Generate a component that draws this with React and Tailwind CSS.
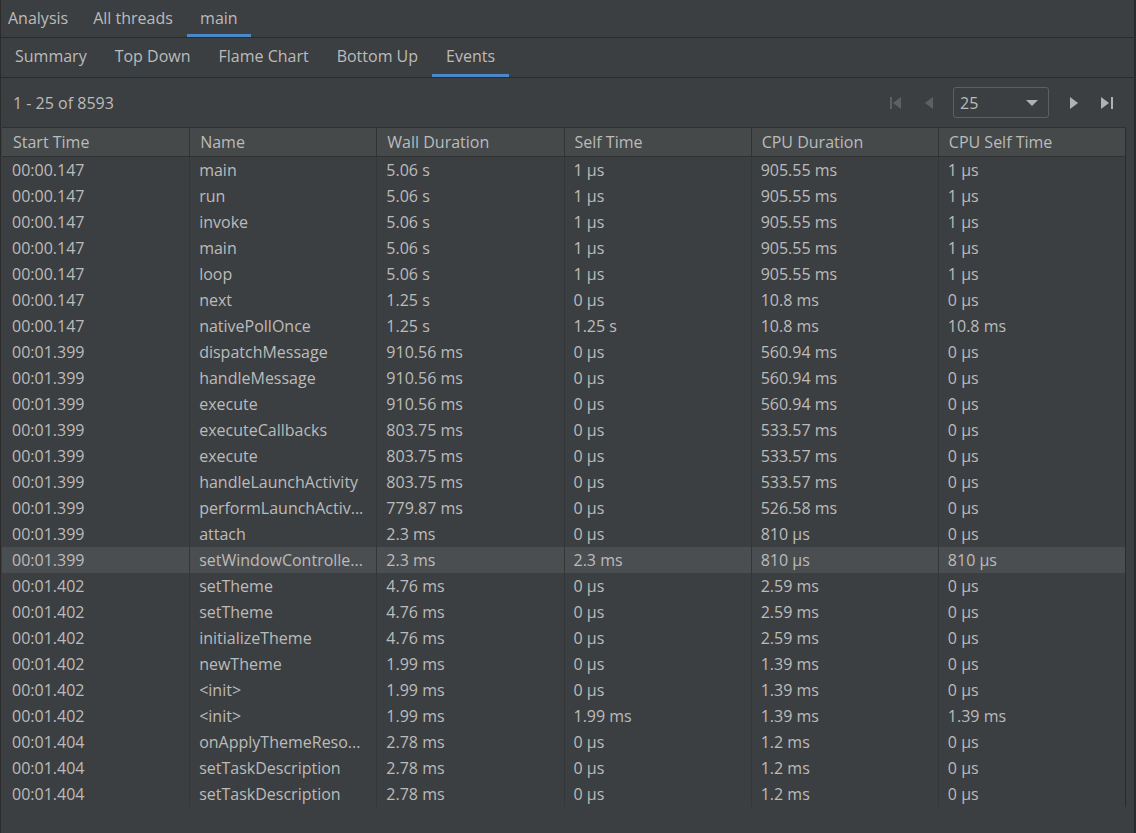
import React from "react";

const rows = [
  ["00:00.147", "main", "5.06 s", "1 μs", "905.55 ms", "1 μs"],
  ["00:00.147", "run", "5.06 s", "1 μs", "905.55 ms", "1 μs"],
  ["00:00.147", "invoke", "5.06 s", "1 μs", "905.55 ms", "1 μs"],
  ["00:00.147", "main", "5.06 s", "1 μs", "905.55 ms", "1 μs"],
  ["00:00.147", "loop", "5.06 s", "1 μs", "905.55 ms", "1 μs"],
  ["00:00.147", "next", "1.25 s", "0 μs", "10.8 ms", "0 μs"],
  ["00:00.147", "nativePollOnce", "1.25 s", "1.25 s", "10.8 ms", "10.8 ms"],
  ["00:01.399", "dispatchMessage", "910.56 ms", "0 μs", "560.94 ms", "0 μs"],
  ["00:01.399", "handleMessage", "910.56 ms", "0 μs", "560.94 ms", "0 μs"],
  ["00:01.399", "execute", "910.56 ms", "0 μs", "560.94 ms", "0 μs"],
  ["00:01.399", "executeCallbacks", "803.75 ms", "0 μs", "533.57 ms", "0 μs"],
  ["00:01.399", "execute", "803.75 ms", "0 μs", "533.57 ms", "0 μs"],
  ["00:01.399", "handleLaunchActivity", "803.75 ms", "0 μs", "533.57 ms", "0 μs"],
  ["00:01.399", "performLaunchActiv...", "779.87 ms", "0 μs", "526.58 ms", "0 μs"],
  ["00:01.399", "attach", "2.3 ms", "0 μs", "810 μs", "0 μs"],
  ["00:01.399", "setWindowControlle...", "2.3 ms", "2.3 ms", "810 μs", "810 μs"],
  ["00:01.402", "setTheme", "4.76 ms", "0 μs", "2.59 ms", "0 μs"],
  ["00:01.402", "setTheme", "4.76 ms", "0 μs", "2.59 ms", "0 μs"],
  ["00:01.402", "initializeTheme", "4.76 ms", "0 μs", "2.59 ms", "0 μs"],
  ["00:01.402", "newTheme", "1.99 ms", "0 μs", "1.39 ms", "0 μs"],
  ["00:01.402", "<init>", "1.99 ms", "0 μs", "1.39 ms", "0 μs"],
  ["00:01.402", "<init>", "1.99 ms", "1.99 ms", "1.39 ms", "1.39 ms"],
  ["00:01.404", "onApplyThemeReso...", "2.78 ms", "0 μs", "1.2 ms", "0 μs"],
  ["00:01.404", "setTaskDescription", "2.78 ms", "0 μs", "1.2 ms", "0 μs"],
  ["00:01.404", "setTaskDescription", "2.78 ms", "0 μs", "1.2 ms", "0 μs"],
];

const headers = ["Start Time", "Name", "Wall Duration", "Self Time", "CPU Duration", "CPU Self Time"];
const subTabs = ["Summary", "Top Down", "Flame Chart", "Bottom Up", "Events"];

function FirstIcon() {
  return (
    <svg width="14" height="14" viewBox="0 0 14 14">
      <rect x="1" y="1" width="2" height="12" fill="#5d6061" />
      <path d="M12 1 L4 7 L12 13 Z" fill="#5d6061" />
    </svg>
  );
}

function PrevIcon() {
  return (
    <svg width="12" height="14" viewBox="0 0 12 14">
      <path d="M10 1 L2 7 L10 13 Z" fill="#5d6061" />
    </svg>
  );
}

function NextIcon() {
  return (
    <svg width="12" height="14" viewBox="0 0 12 14">
      <path d="M2 1 L10 7 L2 13 Z" fill="#afb1b3" />
    </svg>
  );
}

function LastIcon() {
  return (
    <svg width="14" height="14" viewBox="0 0 14 14">
      <path d="M1 1 L9 7 L1 13 Z" fill="#afb1b3" />
      <rect x="11" y="1" width="2" height="12" fill="#afb1b3" />
    </svg>
  );
}

export default function App() {
  return (
    <div
      className="w-[1136px] h-[833px] bg-[#3c3f41] text-[#bbbbbb] flex flex-col overflow-hidden border-l border-r-2 border-[#2b2b2b]"
      style={{ fontFamily: '"Open Sans", "Noto Sans", sans-serif' }}
    >
      {/* top tabs */}
      <div className="h-[38px] flex items-stretch border-b border-[#2b2b2b] text-[16px] pl-[6px]">
        <div className="px-px flex items-center pb-px">Analysis</div>
        <div className="ml-[24px] flex items-center pb-px">All threads</div>
        <div className="ml-[14px] w-[64px] flex items-center justify-center border-b-[3px] border-[#4a88c7] pt-[2px]">main</div>
      </div>

      {/* sub tabs */}
      <div className="h-[40px] flex items-stretch border-b border-[#2b2b2b] text-[16px] pl-[1px]">
        {subTabs.map((t) => (
          <div
            key={t}
            className={`${t === "Summary" ? "pl-[13px] pr-[14px]" : "px-[14px]"} flex items-center ${
              t === "Events" ? "border-b-[3px] border-[#4a88c7]" : "pb-[3px]"
            }`}
          >
            {t}
          </div>
        ))}
      </div>

      {/* toolbar */}
      <div className="h-[49px] flex items-center pl-[12px] pr-[20px] text-[16px]">
        <div className="flex-1">1 - 25 of 8593</div>
        <div className="flex items-center">
          <FirstIcon />
          <div className="ml-[20px]">
            <PrevIcon />
          </div>
          <div className="ml-[18px] w-[96px] h-[31px] rounded-[3px] border border-[#5e6060] bg-[#3c3f41] flex items-center pl-[6px] pr-[10px]">
            <span className="flex-1">25</span>
            <svg width="12" height="8" viewBox="0 0 12 8">
              <path d="M0 1 L12 1 L6 7 Z" fill="#afb1b3" />
            </svg>
          </div>
          <div className="ml-[19px]">
            <NextIcon />
          </div>
          <div className="ml-[20px]">
            <LastIcon />
          </div>
        </div>
      </div>

      {/* table */}
      <div className="ml-[1px] w-[1124px] border-r border-[#2b2b2b]">
        <div className="grid grid-cols-6 h-[30px] bg-[#45494a] border-y border-[#2f3133] text-[16px]">
          {headers.map((h, i) => (
            <div
              key={h}
              className={`flex items-center ${i > 0 ? "pl-[10px] border-l border-[#313335]" : "pl-[11px]"}`}
            >
              {h}
            </div>
          ))}
        </div>
        {rows.map((r, idx) => (
          <div
            key={idx}
            className={`grid grid-cols-6 h-[26px] text-[16px] ${
              idx === 15 ? "bg-[#4b4e50]" : ""
            }`}
          >
            {r.map((c, i) => (
              <div
                key={i}
                className={`flex items-center whitespace-nowrap overflow-hidden ${
                  i > 0 ? "pl-[9px] border-l border-[#343638]" : "pl-[10px]"
                }`}
              >
                {c}
              </div>
            ))}
          </div>
        ))}
      </div>
    </div>
  );
}
